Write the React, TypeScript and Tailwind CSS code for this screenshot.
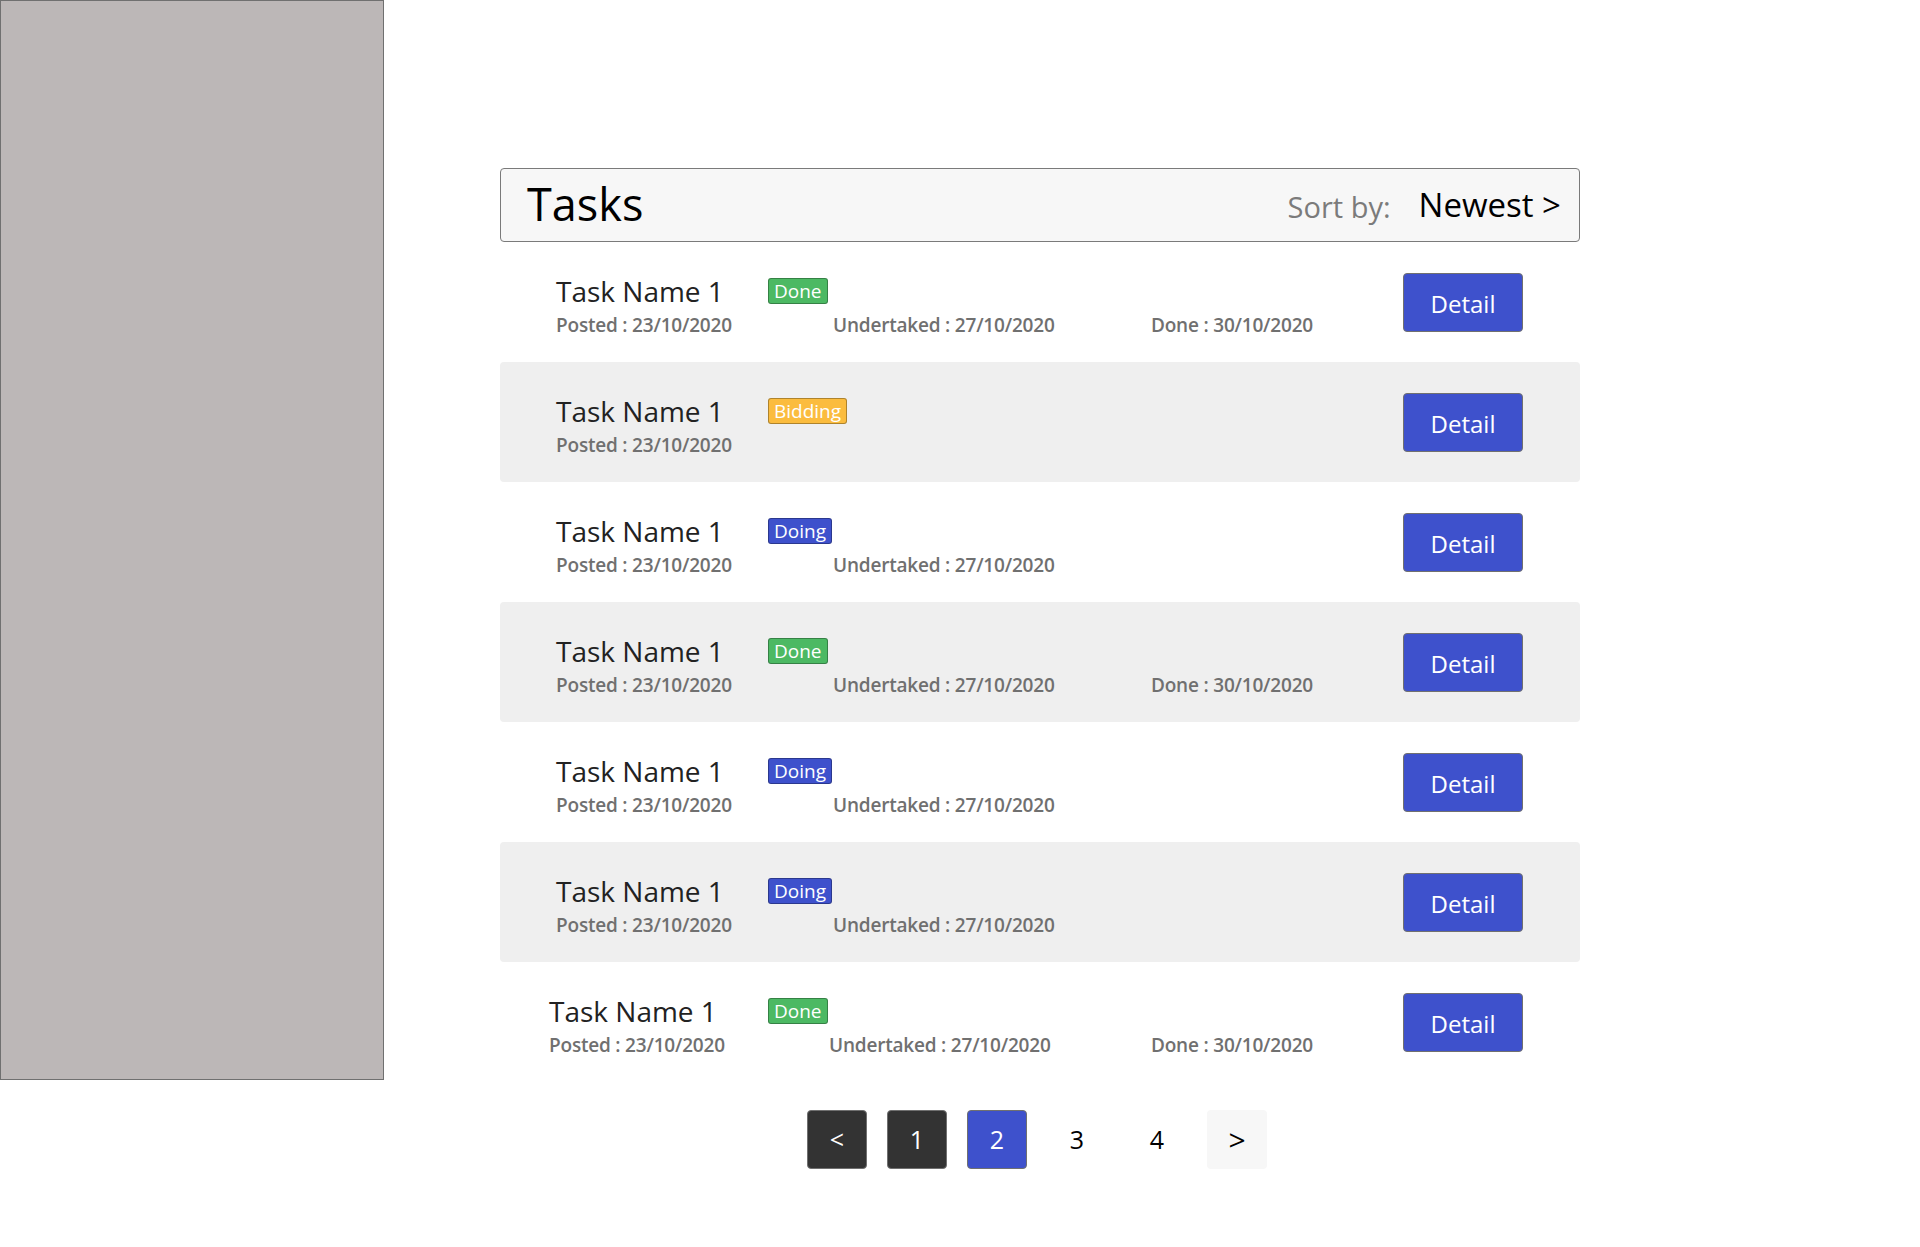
import React from "react";

type Status = "Done" | "Bidding" | "Doing";

type Task = {
  name: string;
  status: Status;
  posted: string;
  undertaked?: string;
  done?: string;
};

const tasks: Task[] = [
  { name: "Task Name 1", status: "Done", posted: "23/10/2020", undertaked: "27/10/2020", done: "30/10/2020" },
  { name: "Task Name 1", status: "Bidding", posted: "23/10/2020" },
  { name: "Task Name 1", status: "Doing", posted: "23/10/2020", undertaked: "27/10/2020" },
  { name: "Task Name 1", status: "Done", posted: "23/10/2020", undertaked: "27/10/2020", done: "30/10/2020" },
  { name: "Task Name 1", status: "Doing", posted: "23/10/2020", undertaked: "27/10/2020" },
  { name: "Task Name 1", status: "Doing", posted: "23/10/2020", undertaked: "27/10/2020" },
  { name: "Task Name 1", status: "Done", posted: "23/10/2020", undertaked: "27/10/2020", done: "30/10/2020" },
];

const badgeColor: Record<Status, string> = {
  Done: "bg-[#4cb963]",
  Bidding: "bg-[#fbbc3e]",
  Doing: "bg-[#3e51cc]",
};

const Badge = ({ status }: { status: Status }) => (
  <span
    className={`${badgeColor[status]} text-white text-[19px] leading-[24px] px-[5px] rounded-[3px] border border-black/30`}
  >
    {status}
  </span>
);

const TaskRow = ({ task, striped, last }: { task: Task; striped: boolean; last: boolean }) => {
  // the last row in the mock sits a few px further left
  const nameW = last ? "w-[219px]" : "w-[212px]";
  const postedW = last ? "w-[280px]" : "w-[277px]";
  const underW = last ? "w-[322px]" : "w-[318px]";
  return (
    <div
      className={`h-[120px] flex items-center justify-between rounded-[4px] pr-[57px] ${
        last ? "pl-[49px]" : "pl-[56px]"
      } ${striped ? "bg-[#efefef]" : ""}`}
    >
      <div className="flex flex-col pt-[6px]">
        <div className="flex items-center h-[34px]">
          <span className={`${nameW} text-[28px] leading-[34px] text-[#222]`}>{task.name}</span>
          <Badge status={task.status} />
        </div>
        <div className="flex mt-[5px] h-[24px] text-[19px] leading-[24px] font-semibold text-[#707070] tracking-[-0.2px]">
          <span className={postedW}>Posted : {task.posted}</span>
          {task.undertaked && <span className={underW}>Undertaked : {task.undertaked}</span>}
          {task.done && <span>Done : {task.done}</span>}
        </div>
      </div>
      <button className="w-[120px] h-[59px] pt-[3px] bg-[#3e51cc] border border-[#707070] rounded-[4px] text-white text-[24px]">
        Detail
      </button>
    </div>
  );
};

const PageButton = ({ children, kind }: { children: React.ReactNode; kind: "dark" | "active" | "plain" | "light" }) => {
  const styles = {
    dark: "bg-[#333333] text-white border border-[#707070]",
    active: "bg-[#3e51cc] text-white border border-[#707070]",
    plain: "text-black",
    light: "bg-[#f7f7f7] text-black",
  }[kind];
  return (
    <button className={`w-[60px] h-[59px] rounded-[4px] flex items-center justify-center text-[25px] ${styles}`}>
      {children}
    </button>
  );
};

export default function App() {
  return (
    <div className="flex bg-white min-h-[1247px]" style={{ fontFamily: '"Open Sans", "Noto Sans", sans-serif' }}>
      <aside className="w-[384px] h-[1080px] bg-[#bcb7b7] border border-[#707070] shrink-0" />

      <main className="pl-[116px] pt-[168px] w-[1196px]">
        <div className="w-[1080px]">
          <div className="h-[74px] bg-[#f7f7f7] border border-[#7a7a7a] rounded-[4px] flex items-center justify-between pl-[26px] pr-[18px]">
            <h1 className="text-[45px] leading-[56px] text-black -mt-[2px]">Tasks</h1>
            <div className="flex items-center">
              <span className="text-[29px] text-[#7b7b7b] mr-[28px] mt-[4px]">Sort by:</span>
              <span className="text-[33px] text-black">Newest &gt;</span>
            </div>
          </div>

          <div className="flex flex-col">
            {tasks.map((t, i) => (
              <TaskRow key={i} task={t} striped={i % 2 === 1} last={i === tasks.length - 1} />
            ))}
          </div>

          <div className="flex justify-center gap-[20px] mt-[28px] pr-[6px]">
            <PageButton kind="dark">&lt;</PageButton>
            <PageButton kind="dark">1</PageButton>
            <PageButton kind="active">2</PageButton>
            <PageButton kind="plain">3</PageButton>
            <PageButton kind="plain">4</PageButton>
            <PageButton kind="light">
              <span className="text-[30px]">&gt;</span>
            </PageButton>
          </div>
        </div>
      </main>
    </div>
  );
}
